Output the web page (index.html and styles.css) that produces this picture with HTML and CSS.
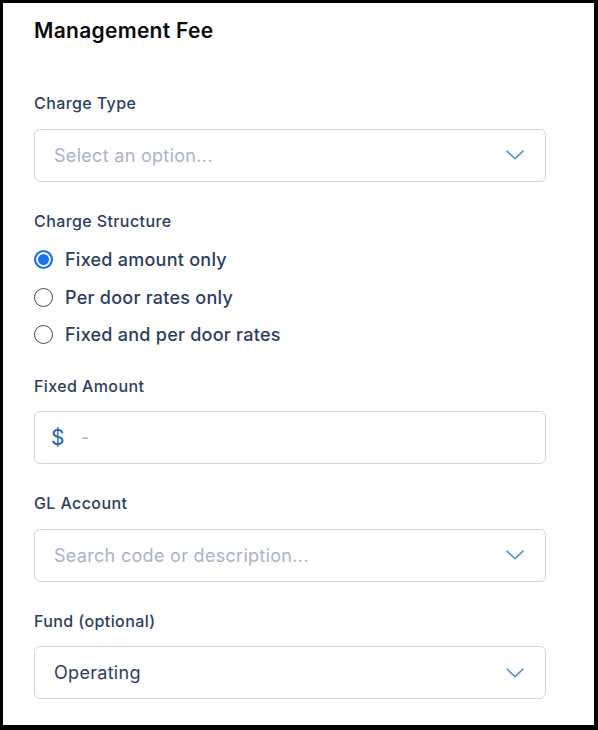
FILE: index.html
```html
<!DOCTYPE html>
<html>
<head>
<meta charset="utf-8">
<link rel="stylesheet" href="styles.css">
</head>
<body>
<div class="frame">
  <div class="panel">
    <h1 class="title">Management Fee</h1>

    <div class="field">
      <div class="label">Charge Type</div>
      <div class="control">
        <span class="placeholder">Select an option...</span>
        <svg class="chev" width="18" height="10" viewBox="0 0 18 10"><path d="M1 1.2 L9 8.6 L17 1.2" fill="none" stroke="#5a8fd8" stroke-width="1.6" stroke-linecap="round" stroke-linejoin="round"/></svg>
      </div>
    </div>

    <div class="field field-radio">
      <div class="label">Charge Structure</div>
      <div class="radios">
        <div class="radio-row"><span class="radio checked"></span><span class="radio-text">Fixed amount only</span></div>
        <div class="radio-row"><span class="radio"></span><span class="radio-text">Per door rates only</span></div>
        <div class="radio-row"><span class="radio"></span><span class="radio-text">Fixed and per door rates</span></div>
      </div>
    </div>

    <div class="field">
      <div class="label">Fixed Amount</div>
      <div class="control">
        <span class="dollar">$</span>
        <span class="dash">-</span>
      </div>
    </div>

    <div class="field">
      <div class="label">GL Account</div>
      <div class="control">
        <span class="placeholder">Search code or description...</span>
        <svg class="chev" width="18" height="10" viewBox="0 0 18 10"><path d="M1 1.2 L9 8.6 L17 1.2" fill="none" stroke="#5a8fd8" stroke-width="1.6" stroke-linecap="round" stroke-linejoin="round"/></svg>
      </div>
    </div>

    <div class="field">
      <div class="label">Fund (optional)</div>
      <div class="control">
        <span class="value">Operating</span>
        <svg class="chev" width="18" height="10" viewBox="0 0 18 10"><path d="M1 1.2 L9 8.6 L17 1.2" fill="none" stroke="#5a8fd8" stroke-width="1.6" stroke-linecap="round" stroke-linejoin="round"/></svg>
      </div>
    </div>
  </div>
</div>
</body>
</html>
```
FILE: styles.css
```css
html, body {
  margin: 0;
  padding: 0;
  background: #000;
}
body {
  width: 598px;
  height: 730px;
  overflow: hidden;
  font-family: Inter, "Noto Sans", sans-serif;
}
.frame {
  padding: 3px 4px 5px 3px;
  height: 730px;
  box-sizing: border-box;
}
.panel {
  background: #fff;
  height: 100%;
  box-sizing: border-box;
  padding: 16px 48px 0 31px;
  display: flex;
  flex-direction: column;
}
.title {
  margin: 0;
  font-size: 21px;
  line-height: 24px;
  font-weight: 600;
  color: #0b0b0b;
  letter-spacing: 0.3px;
}
.field {
  display: flex;
  flex-direction: column;
  gap: 15.5px;
  margin-top: 29px;
}
.title + .field {
  margin-top: 50px;
}
.label {
  font-size: 16px;
  line-height: 20px;
  font-weight: 500;
  color: #2c3e60;
  letter-spacing: 0.4px;
}
.control {
  height: 53px;
  box-sizing: border-box;
  border: 1px solid #c8d6e7;
  border-radius: 6px;
  display: flex;
  align-items: center;
  padding: 0 21px 0 19px;
  font-size: 18px;
  letter-spacing: 0.3px;
}
.placeholder {
  color: #a9b3c5;
  flex: 1;
}
.value {
  color: #2c3e60;
  flex: 1;
}
.chev {
  display: block;
  flex: none;
}
.dollar {
  color: #1f63a8;
  font-size: 21px;
  font-weight: 400;
  margin-left: -3px;
}
.dash {
  color: #a9b3c5;
  margin-left: 16px;
}
.field-radio {
  gap: 17px;
}
.radios {
  display: flex;
  flex-direction: column;
  gap: 13.5px;
}
.radio-row {
  display: flex;
  align-items: center;
  height: 24px;
  gap: 12px;
}
.radio {
  width: 19px;
  height: 19px;
  box-sizing: border-box;
  border: 1.5px solid #3b4a66;
  border-radius: 50%;
  flex: none;
}
.radio.checked {
  border: 2px solid #1a73e8;
  background: #1a73e8;
  box-shadow: inset 0 0 0 2px #fff;
}
.radio-text {
  font-size: 18px;
  font-weight: 500;
  color: #2c3e60;
  letter-spacing: 0.25px;
}
```
